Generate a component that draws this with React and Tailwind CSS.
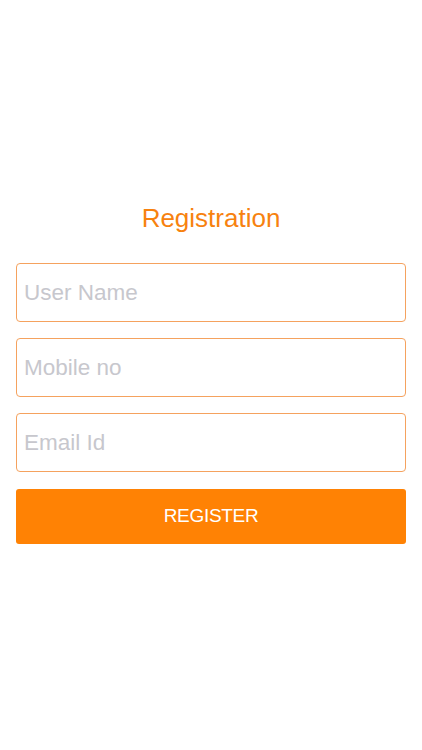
export default function App() {
  const fields = ["User Name", "Mobile no", "Email Id"];
  return (
    <div
      className="w-[422px] h-[750px] bg-white flex flex-col px-4 pt-[203px]"
      style={{ fontFamily: '"Liberation Sans", Arial, sans-serif' }}
    >
      <h1 className="text-[26px] leading-[30px] text-center text-[#f7820f]">Registration</h1>
      <div className="flex flex-col gap-[16px] mt-[30px]">
        {fields.map((f) => (
          <input
            key={f}
            placeholder={f}
            className="h-[59px] w-full border border-[#f5a25e] rounded-[4px] px-[7px] text-[22.5px] outline-none placeholder:text-[#c7c7cd]"
          />
        ))}
      </div>
      <button className="mt-[17px] h-[55px] w-full rounded-[3px] bg-[#ff8204] text-white text-[19px] tracking-[-0.3px]">
        REGISTER
      </button>
    </div>
  );
}
